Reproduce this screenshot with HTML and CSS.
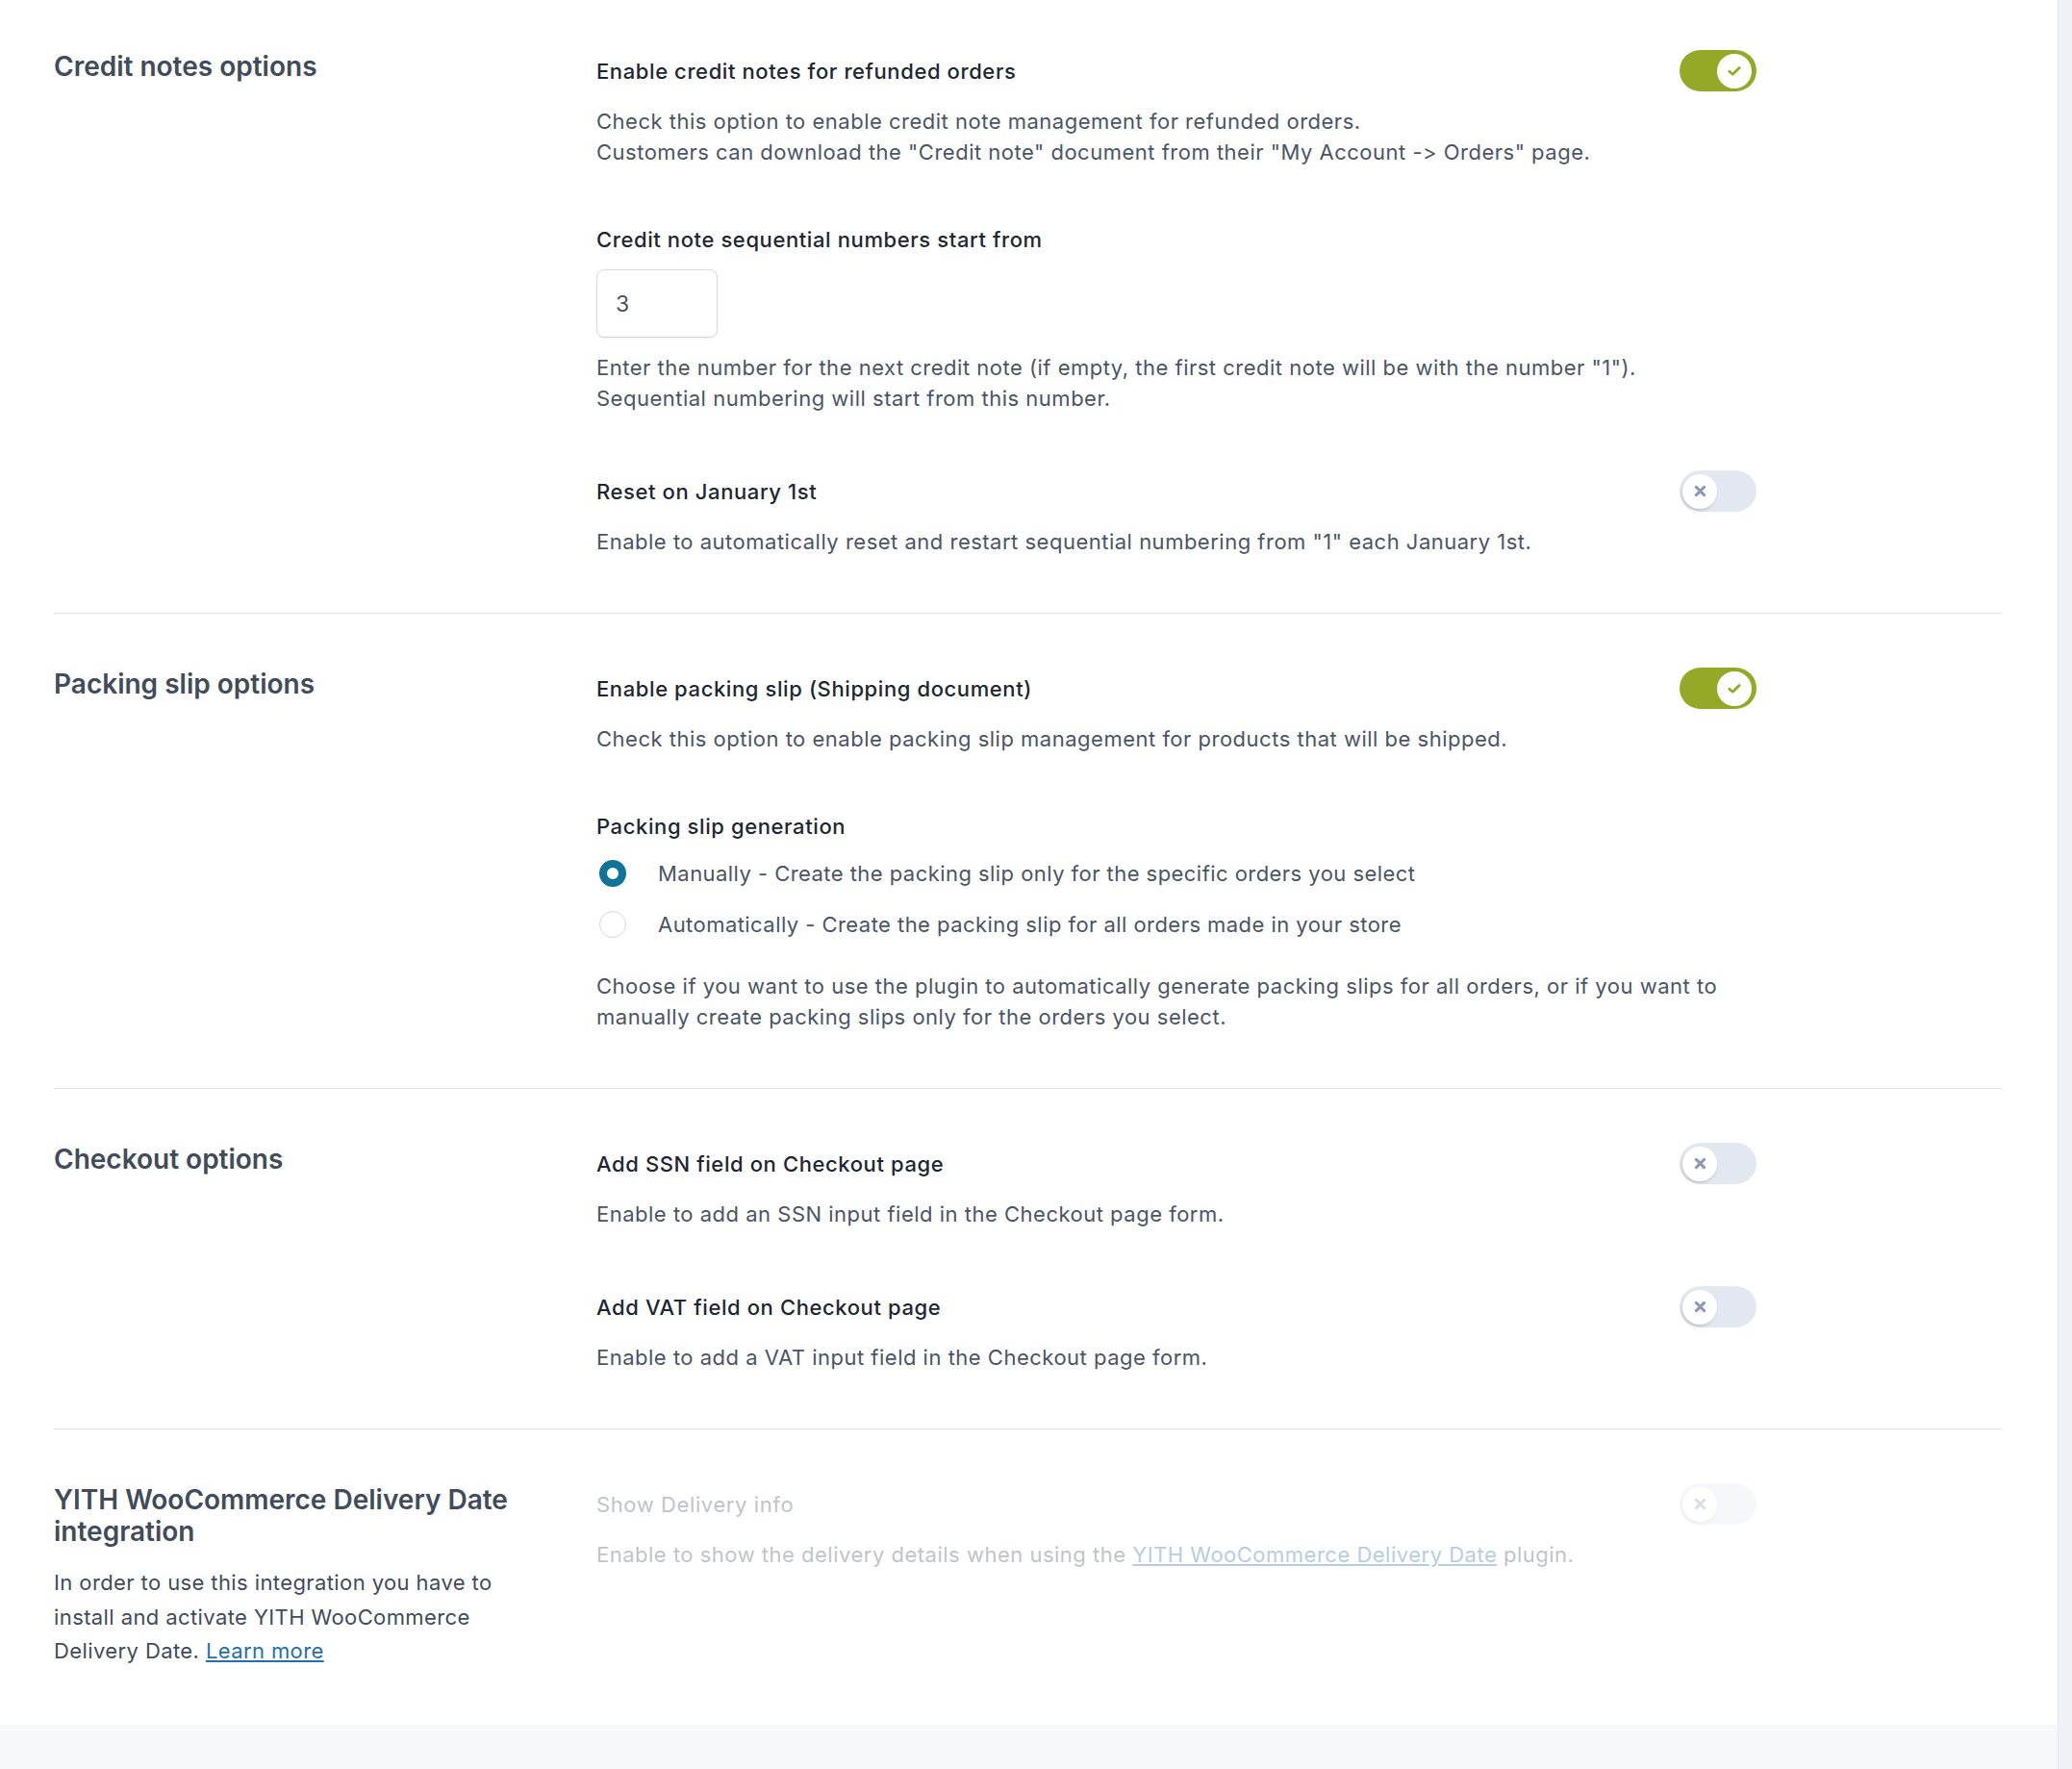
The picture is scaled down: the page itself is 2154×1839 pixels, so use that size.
FILE: index.html
```html
<!DOCTYPE html>
<html lang="en">
<head>
    <meta charset="UTF-8">
    <meta name="viewport" content="width=device-width, initial-scale=1.0">
    <title>Documents settings</title>
    <link rel="stylesheet" href="styles.css">
</head>
<body>
    <div class="page">
        <div class="panel">
            <div class="card">

                <section class="group">
                    <div class="group-info">
                        <h2>Credit notes options</h2>
                    </div>
                    <div class="group-fields">
                        <div class="field">
                            <div class="field-head">
                                <label>Enable credit notes for refunded orders</label>
                                <span class="toggle on">
                                    <span class="knob">
                                        <svg width="14" height="10" viewBox="0 0 14 10"><path d="M1.8 5.2 L5.2 8.2 L12.2 1.6" fill="none" stroke="#95a926" stroke-width="2.8" stroke-linecap="round" stroke-linejoin="round"/></svg>
                                    </span>
                                </span>
                            </div>
                            <p class="desc">Check this option to enable credit note management for refunded orders.<br>Customers can download the "Credit note" document from their "My Account -&gt; Orders" page.</p>
                        </div>

                        <div class="field">
                            <div class="field-head">
                                <label>Credit note sequential numbers start from</label>
                            </div>
                            <input class="num-input" type="text" value="3">
                            <p class="desc">Enter the number for the next credit note (if empty, the first credit note will be with the number "1").<br>Sequential numbering will start from this number.</p>
                        </div>

                        <div class="field">
                            <div class="field-head">
                                <label>Reset on January 1st</label>
                                <span class="toggle">
                                    <span class="knob">
                                        <svg width="13" height="13" viewBox="0 0 12 12"><path d="M2.2 2.2 L9.8 9.8 M9.8 2.2 L2.2 9.8" fill="none" stroke="#8c99ae" stroke-width="2.8" stroke-linecap="round"/></svg>
                                    </span>
                                </span>
                            </div>
                            <p class="desc">Enable to automatically reset and restart sequential numbering from "1" each January 1st.</p>
                        </div>
                    </div>
                </section>

                <section class="group">
                    <div class="group-info">
                        <h2>Packing slip options</h2>
                    </div>
                    <div class="group-fields">
                        <div class="field">
                            <div class="field-head">
                                <label>Enable packing slip (Shipping document)</label>
                                <span class="toggle on">
                                    <span class="knob">
                                        <svg width="14" height="10" viewBox="0 0 14 10"><path d="M1.8 5.2 L5.2 8.2 L12.2 1.6" fill="none" stroke="#95a926" stroke-width="2.8" stroke-linecap="round" stroke-linejoin="round"/></svg>
                                    </span>
                                </span>
                            </div>
                            <p class="desc">Check this option to enable packing slip management for products that will be shipped.</p>
                        </div>

                        <div class="field">
                            <div class="field-head">
                                <label>Packing slip generation</label>
                            </div>
                            <div class="radios">
                                <div class="radio-row">
                                    <span class="radio checked"></span>
                                    <span>Manually - Create the packing slip only for the specific orders you select</span>
                                </div>
                                <div class="radio-row">
                                    <span class="radio"></span>
                                    <span>Automatically - Create the packing slip for all orders made in your store</span>
                                </div>
                            </div>
                            <p class="desc after-radios">Choose if you want to use the plugin to automatically generate packing slips for all orders, or if you want to<br>manually create packing slips only for the orders you select.</p>
                        </div>
                    </div>
                </section>

                <section class="group">
                    <div class="group-info">
                        <h2>Checkout options</h2>
                    </div>
                    <div class="group-fields">
                        <div class="field">
                            <div class="field-head">
                                <label>Add SSN field on Checkout page</label>
                                <span class="toggle">
                                    <span class="knob">
                                        <svg width="13" height="13" viewBox="0 0 12 12"><path d="M2.2 2.2 L9.8 9.8 M9.8 2.2 L2.2 9.8" fill="none" stroke="#8c99ae" stroke-width="2.8" stroke-linecap="round"/></svg>
                                    </span>
                                </span>
                            </div>
                            <p class="desc">Enable to add an SSN input field in the Checkout page form.</p>
                        </div>

                        <div class="field">
                            <div class="field-head">
                                <label>Add VAT field on Checkout page</label>
                                <span class="toggle">
                                    <span class="knob">
                                        <svg width="13" height="13" viewBox="0 0 12 12"><path d="M2.2 2.2 L9.8 9.8 M9.8 2.2 L2.2 9.8" fill="none" stroke="#8c99ae" stroke-width="2.8" stroke-linecap="round"/></svg>
                                    </span>
                                </span>
                            </div>
                            <p class="desc">Enable to add a VAT input field in the Checkout page form.</p>
                        </div>
                    </div>
                </section>

                <section class="group">
                    <div class="group-info">
                        <h2>YITH WooCommerce Delivery Date integration</h2>
                        <p class="info-text">In order to use this integration you have to install and activate YITH WooCommerce Delivery Date. <a href="#">Learn more</a></p>
                    </div>
                    <div class="group-fields">
                        <div class="field disabled">
                            <div class="field-head">
                                <label>Show Delivery info</label>
                                <span class="toggle">
                                    <span class="knob">
                                        <svg width="13" height="13" viewBox="0 0 12 12"><path d="M2.2 2.2 L9.8 9.8 M9.8 2.2 L2.2 9.8" fill="none" stroke="#8c99ae" stroke-width="2.8" stroke-linecap="round"/></svg>
                                    </span>
                                </span>
                            </div>
                            <p class="desc">Enable to show the delivery details when using the <a href="#">YITH WooCommerce Delivery Date</a> plugin.</p>
                        </div>
                    </div>
                </section>

            </div>
        </div>
        <div class="side-strip"></div>
    </div>
</body>
</html>
```

FILE: styles.css
```css
* {
    margin: 0;
    padding: 0;
    box-sizing: border-box;
}

body {
    font-family: 'Inter', 'Noto Sans', sans-serif;
    background-color: #f5f9fc;
    color: #4a5567;
}

.page {
    display: flex;
    min-height: 100vh;
}

.panel {
    flex: 1;
}

.side-strip {
    width: 15px;
    background-color: #eef2f7;
    border-left: 1px solid #e4e9ef;
}

.card {
    background-color: #fff;
    padding: 0 58px 0 56px;
}

.group {
    display: grid;
    grid-template-columns: 510px 1206px;
    column-gap: 54px;
    padding: 56px 0 58px;
    border-bottom: 1px solid #dfe3e8;
}

.group:first-child {
    padding-top: 52px;
}

.group:last-child {
    border-bottom: none;
    padding-bottom: 58px;
}

.group-info h2 {
    font-size: 28px;
    font-weight: 600;
    line-height: 33px;
    color: #404c5c;
    padding-top: 1px;
}

.info-text {
    margin-top: 19px;
    font-size: 22px;
    line-height: 35.7px;
    color: #404c5c;
    letter-spacing: 0.4px;
}

.info-text a {
    color: #1f6fb2;
}

.group-fields {
    display: flex;
    flex-direction: column;
    gap: 59px;
}

.field {
    display: flex;
    flex-direction: column;
    gap: 15px;
}

.field-head {
    display: flex;
    align-items: center;
    justify-content: space-between;
}

.field-head label {
    font-size: 22px;
    font-weight: 500;
    line-height: 32px;
    color: #1d2733;
    letter-spacing: 0.6px;
}

.desc {
    font-size: 22px;
    line-height: 32px;
    color: #4a5567;
    letter-spacing: 0.5px;
}

.desc.after-radios {
    margin-top: 15px;
}

/* toggle */
.toggle {
    display: flex;
    align-items: center;
    width: 80px;
    height: 43px;
    border-radius: 22px;
    padding: 0 3px;
    background-color: #e2e8f0;
}

.toggle.on {
    background-color: #95a926;
    justify-content: flex-end;
    padding: 0 5px;
}

.knob {
    display: flex;
    align-items: center;
    justify-content: center;
    width: 36px;
    height: 36px;
    border-radius: 50%;
    background-color: #fff;
    box-shadow: -1px 2px 3px rgba(40, 50, 70, 0.18);
}

.toggle.on .knob {
    box-shadow: none;
}

/* number input */
.num-input {
    width: 126px;
    height: 71px;
    border: 1px solid #d6dbe2;
    border-radius: 8px;
    box-shadow: 0 1px 2px rgba(30, 40, 60, 0.08);
    padding-left: 19px;
    font-family: inherit;
    font-size: 23px;
    color: #4a5567;
    outline: none;
}

/* radios */
.radios {
    display: flex;
    flex-direction: column;
    gap: 17px;
}

.radio-row {
    display: flex;
    align-items: center;
    gap: 33px;
    height: 36px;
    font-size: 22px;
    color: #4a5567;
    letter-spacing: 0.45px;
}

.radio {
    width: 28px;
    height: 28px;
    margin-left: 3px;
    border-radius: 50%;
    border: 1.5px solid #d3d8df;
    background-color: #fff;
}

.radio.checked {
    border: 8px solid #10739a;
}

/* disabled field */
.field.disabled .field-head label,
.field.disabled .desc {
    color: #bfc4cb;
    font-weight: 400;
}

.field.disabled .desc a {
    color: #b6cde3;
}

.field.disabled .toggle {
    opacity: 0.3;
}
```
